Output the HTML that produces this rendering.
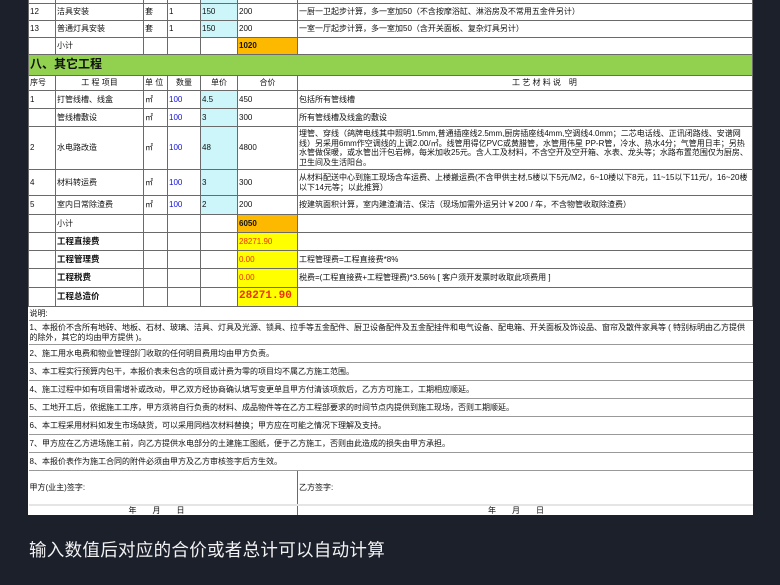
<!DOCTYPE html>
<html><head><meta charset="utf-8"><style>
body{margin:0;width:780px;height:585px;background:#1c202b;overflow:hidden;font-family:"Liberation Sans","Noto Sans CJK SC",sans-serif;position:relative}
table{position:absolute;left:28px;top:-2px;border-collapse:collapse;background:#fff;table-layout:fixed;width:724px}
td{border:1.5px solid #6a6a6a;font-size:8px;line-height:9.5px;padding:0 1px;color:#111;overflow:hidden;white-space:nowrap;vertical-align:middle}
td.w{white-space:normal}
.c{background:#ccf6fa}.b{color:#1010e0}.o{background:#fdb900;font-weight:bold}.y{background:#ffff00;color:#f03000}
.g td{background:#92d14f;font-size:12px;font-weight:bold;border-color:#6a6a6a}
.bd{font-weight:bold;font-size:8.5px}
.n td{border-left:none;border-right:none;border-color:#999}
.cap{position:absolute;left:29px;top:537px;color:#f2f2f2;font-size:17.5px;letter-spacing:0.3px}
</style></head><body>
<table>
<colgroup><col style="width:27px"><col style="width:88px"><col style="width:24px"><col style="width:33px"><col style="width:37px"><col style="width:60px"><col style="width:455px"></colgroup>
<tr style="height:5px"><td></td><td></td><td></td><td></td><td class="c"></td><td></td><td></td></tr>
<tr style="height:17px"><td>12</td><td>洁具安装</td><td>套</td><td>1</td><td class="c">150</td><td>200</td><td>一厨一卫起步计算，多一室加50（不含按摩浴缸、淋浴房及不常用五金件另计）</td></tr>
<tr style="height:17px"><td>13</td><td>普通灯具安装</td><td>套</td><td>1</td><td class="c">150</td><td>200</td><td>一室一厅起步计算，多一室加50（含开关面板、复杂灯具另计）</td></tr>
<tr style="height:17px"><td></td><td>小计</td><td></td><td></td><td></td><td class="o">1020</td><td></td></tr>
<tr class="g" style="height:21px"><td colspan="7">八、其它工程</td></tr>
<tr style="height:15px"><td>序号</td><td style="text-align:center">工 程 项目</td><td>单 位</td><td style="text-align:center">数量</td><td style="text-align:center">单价</td><td style="text-align:center">合价</td><td style="text-align:center;padding-left:40px">工 艺 材 料 说　明</td></tr>
<tr style="height:18px"><td>1</td><td>打管线槽、线盒</td><td>㎡</td><td class="b">100</td><td class="c">4.5</td><td>450</td><td>包括所有管线槽</td></tr>
<tr style="height:18px"><td></td><td>管线槽敷设</td><td>㎡</td><td class="b">100</td><td class="c">3</td><td>300</td><td>所有管线槽及线盒的敷设</td></tr>
<tr style="height:43px"><td>2</td><td>水电路改造</td><td>㎡</td><td class="b">100</td><td class="c">48</td><td>4800</td><td class="w">埋管、穿线（鸽牌电线其中照明1.5mm,普通插座线2.5mm,厨房插座线4mm,空调线4.0mm；二芯电话线、正讯闭路线、安谱网线）另采用6mm作空调线的上调2.00/㎡。线管用得亿PVC或黄腊管，水管用伟星 PP-R管，冷水、热水4分；气管用日丰；另热水管做保暖，或水管出汗包岩棉，每米加收25元。含人工及材料，不含空开及空开箱、水表、龙头等；水路布置范围仅为厨房、卫生间及生活阳台。</td></tr>
<tr style="height:26px"><td>4</td><td>材料转运费</td><td>㎡</td><td class="b">100</td><td class="c">3</td><td>300</td><td class="w">从材料配送中心到施工现场含车运费、上楼搬运费(不含甲供主材,5楼以下5元/M2，6~10楼以下8元，11~15以下11元/，16~20楼以下14元等；以此推算）</td></tr>
<tr style="height:19px"><td>5</td><td>室内日常除渣费</td><td>㎡</td><td class="b">100</td><td class="c">2</td><td>200</td><td>按建筑面积计算，室内建渣清洁、保洁（现场加需外运另计￥200 / 车，不含物管收取除渣费）</td></tr>
<tr style="height:18px"><td></td><td>小计</td><td></td><td></td><td></td><td class="o">6050</td><td></td></tr>
<tr style="height:18px"><td></td><td class="bd">工程直接费</td><td></td><td></td><td></td><td class="y">28271.90</td><td></td></tr>
<tr style="height:18px"><td></td><td class="bd">工程管理费</td><td></td><td></td><td></td><td class="y">0.00</td><td>工程管理费=工程直接费*8%</td></tr>
<tr style="height:19px"><td></td><td class="bd">工程税费</td><td></td><td></td><td></td><td class="y">0.00</td><td>税费=(工程直接费+工程管理费)*3.56% [ 客户须开发票时收取此项费用 ]</td></tr>
<tr style="height:19px"><td></td><td class="bd">工程总造价</td><td></td><td></td><td></td><td class="y" style="font-size:11px;font-weight:bold;font-family:'Liberation Mono',monospace">28271.90</td><td></td></tr>
<tr class="n" style="height:14px"><td colspan="7">说明:</td></tr>
<tr class="n" style="height:24px"><td colspan="7" class="w">1、本报价不含所有地砖、地板、石材、玻璃、洁具、灯具及光源、锁具、拉手等五金配件、厨卫设备配件及五金配挂件和电气设备、配电箱、开关面板及饰设品、窗帘及散件家具等 ( 特别标明由乙方提供的除外，其它的均由甲方提供 )。</td></tr>
<tr class="n" style="height:18px"><td colspan="7">2、施工用水电费和物业管理部门收取的任何明目费用均由甲方负责。</td></tr>
<tr class="n" style="height:18px"><td colspan="7">3、本工程实行预算内包干，本报价表未包含的项目或计费为零的项目均不属乙方施工范围。</td></tr>
<tr class="n" style="height:18px"><td colspan="7">4、施工过程中如有项目需增补或改动，甲乙双方经协商确认填写变更单且甲方付清该项款后，乙方方可施工，工期相应顺延。</td></tr>
<tr class="n" style="height:18px"><td colspan="7">5、工地开工后，依据施工工序，甲方须将自行负责的材料、成品物件等在乙方工程部要求的时间节点内提供到施工现场，否则工期顺延。</td></tr>
<tr class="n" style="height:18px"><td colspan="7">6、本工程采用材料如发生市场缺货，可以采用同档次材料替换；甲方应在可能之情况下理解及支持。</td></tr>
<tr class="n" style="height:18px"><td colspan="7">7、甲方应在乙方进场施工前，向乙方提供水电部分的土建施工图纸，便于乙方施工，否则由此造成的损失由甲方承担。</td></tr>
<tr class="n" style="height:18px"><td colspan="7">8、本报价表作为施工合同的附件必须由甲方及乙方审核签字后方生效。</td></tr>
<tr style="height:34px"><td colspan="6" style="border-left:none;border-bottom:none">甲方(业主)签字:</td><td style="border-right:none;border-bottom:none">乙方签字:</td></tr>
<tr style="height:10px"><td colspan="6" style="border:none;padding-left:100px;border-top:2px solid #e5e5e5">年　　月　　日</td><td style="border:none;border-left:1.5px solid #6a6a6a;padding-left:190px;border-top:2px solid #e5e5e5">年　　月　　日</td></tr>
</table>
<div class="cap">输入数值后对应的合价或者总计可以自动计算</div>
</body></html>
